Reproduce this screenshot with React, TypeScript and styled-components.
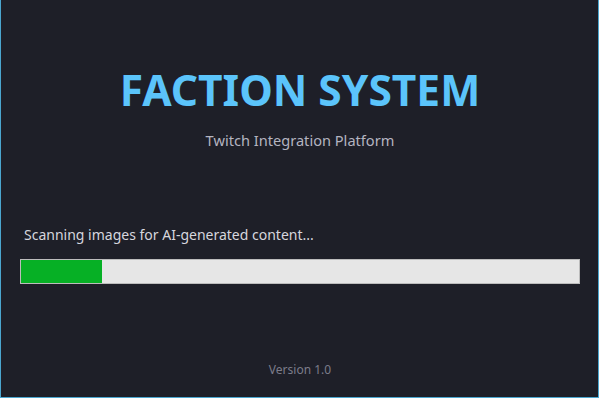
import React from "react";
import styled, { createGlobalStyle } from "styled-components";

const Global = createGlobalStyle`
  html, body { margin: 0; padding: 0; background: #1e1f28; }
  #root { width: 599px; height: 398px; }
`;

const Window = styled.div`
  box-sizing: border-box;
  width: 599px;
  height: 398px;
  background: #1e1f28;
  border-left: 1px solid #4ba6cf;
  border-right: 1px solid #4ba6cf;
  border-bottom: 1px solid #4ba6cf;
  display: flex;
  flex-direction: column;
  font-family: "Noto Sans", "Open Sans", sans-serif;
  padding: 62px 18px 0 19px;
`;

const Header = styled.div`
  display: flex;
  flex-direction: column;
  align-items: center;
`;

const Title = styled.h1`
  margin: 0;
  font-size: 42.5px;
  line-height: 56px;
  font-weight: 700;
  color: #5bc4fb;
`;

const Subtitle = styled.div`
  margin-top: 12px;
  font-size: 14.6px;
  line-height: 20px;
  color: #b4b4c0;
`;

const Status = styled.div`
  margin-top: 75px;
  padding-left: 4px;
  font-size: 14px;
  line-height: 20px;
  color: #d6d6de;
`;

const Track = styled.div`
  margin-top: 14px;
  box-sizing: border-box;
  height: 25px;
  background: #e6e6e6;
  border: 1px solid #bcbcbc;
  display: flex;
`;

const Fill = styled.div`
  background: #06b025;
  height: 100%;
`;

const Footer = styled.div`
  margin-top: auto;
  padding-bottom: 19px;
  text-align: center;
  font-size: 12px;
  line-height: 16px;
  color: #7c7c8a;
`;

export default function App() {
  const progress = 0.146;
  return (
    <>
      <Global />
      <Window>
        <Header>
          <Title>FACTION SYSTEM</Title>
          <Subtitle>Twitch Integration Platform</Subtitle>
        </Header>
        <Status>Scanning images for AI-generated content...</Status>
        <Track>
          <Fill style={{ width: `${progress * 100}%` }} />
        </Track>
        <Footer>Version 1.0</Footer>
      </Window>
    </>
  );
}
